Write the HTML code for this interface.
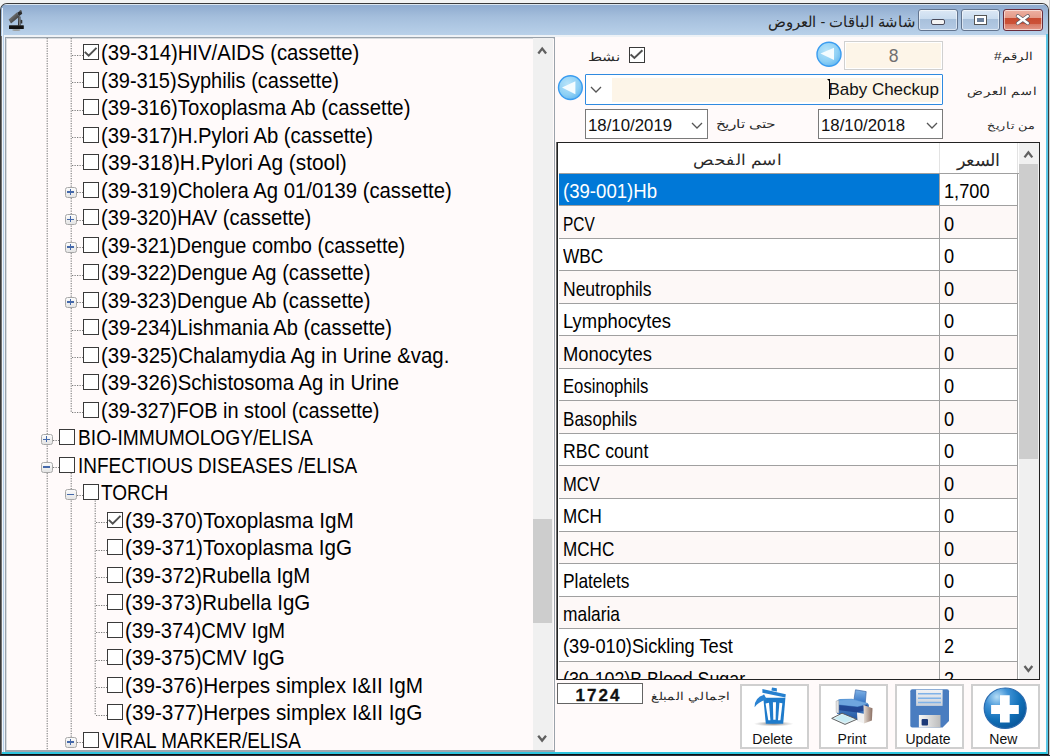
<!DOCTYPE html>
<html><head><meta charset="utf-8">
<style>
*{margin:0;padding:0;box-sizing:border-box}
html,body{width:1050px;height:756px;overflow:hidden;background:#6f7d98;font-family:"Liberation Sans",sans-serif;position:relative}
.abs{position:absolute}
#frame{position:absolute;left:0;top:3px;width:1049px;height:752px;border:1px solid #3a3a3a;box-shadow:inset 1px 0 0 #707070;border-bottom-color:#101010;border-radius:7px 7px 0 0;background:#b9d1ea;overflow:hidden}
#titlebar{position:absolute;left:0;top:0;width:1047px;height:32px;background:linear-gradient(#dce6f0 0,#dce6f0 1px,#8fabcf 1px,#a4bedc 40%,#bad2ea 100%)}
#hl-left{position:absolute;left:1px;top:4px;width:1px;height:746px;background:#eef5fc}
#client{position:absolute;left:4px;top:31px;width:1041px;height:717px;background:#fffafa}
#hl-left2{position:absolute;left:3px;top:31px;width:1px;height:717px;background:#eef4fa}
#hl-top2{position:absolute;left:4px;top:31px;width:1041px;height:2px;background:#eef2f6}
#bottomline{position:absolute;left:1px;top:748px;width:1045px;height:2px;background:#2ec4de}
#rightline{position:absolute;left:1045px;top:30px;width:2px;height:720px;background:#5cc6e6}
.tbtn{position:absolute;top:9px;height:22px;border:1px solid #62748e;border-radius:3px;box-shadow:inset 0 0 0 1px rgba(255,255,255,0.55);background:linear-gradient(#dce8f5 0,#cadcef 44%,#a8c0db 45%,#b4cae4 100%)}
#closebtn{background:linear-gradient(#eeb0a2 0,#e49a88 40%,#c84a30 42%,#cc5238 68%,#d87a66 72%,#e49888 100%);border-color:#6a2c3c}
#title{position:absolute;top:13px;right:134px;transform:scaleX(0.986);transform-origin:100% 50%;font-size:14.6px;color:#222;direction:rtl;white-space:nowrap}

#tree{position:absolute;left:5px;top:37px;width:550px;height:715px;border:1px solid #9aa2aa;border-bottom:2px solid #a0a8b0;box-shadow:inset 1px 1px 0 #d8dcdf;background:#fffafa}
#treein{position:absolute;left:-6px;top:-38px;width:1050px;height:800px}
.vl{position:absolute;width:1.2px;margin-left:-0.4px;background:repeating-linear-gradient(to bottom,#6a6a6a 0 1.5px,transparent 1.5px 2.5px)}
.hl{position:absolute;height:1.2px;background:repeating-linear-gradient(to right,#6a6a6a 0 1.5px,transparent 1.5px 2.5px)}
.pm{position:absolute;width:11.5px;height:11px;border:1.2px solid #a8a8a8;border-radius:2.5px;background:linear-gradient(#fbfbfb,#e4e4e4)}
.pm .ph{position:absolute;left:1.4px;top:3.8px;width:6.2px;height:1.15px;background:#4468aa}
.pm .pv{position:absolute;left:3.85px;top:1.2px;width:1.3px;height:6.2px;background:#4468aa}
.cb{position:absolute;width:16px;height:16px;border:1.5px solid #3a3a3a;background:#fff}
.cb svg{position:absolute;left:0;top:0}
.tt{position:absolute;font-size:21.5px;line-height:24px;white-space:nowrap;color:#000;transform-origin:0 50%}

#tsb{position:absolute;left:527px;top:0px;width:20px;height:712px;background:#f0f0f0}
#tsb .thumb{position:absolute;left:0px;top:481px;width:19px;height:104px;background:#cdcdcd}

.lbl{position:absolute;direction:rtl;white-space:nowrap;font-size:13px;color:#2a2a2a}
#num{position:absolute;left:844px;top:41px;width:99px;height:29px;border:1px solid #d0d0d0;box-shadow:inset 0 0 0 1px #fff;background:#fdf5e8;color:#707070;font-size:17.5px;text-align:center;line-height:28px}
.circ{position:absolute;width:25px;height:25px;border-radius:50%;background:radial-gradient(circle at 50% 45%,#c4e8fb 0,#8ed0f5 45%,#47a4e8 80%,#3d97e0 100%)}
.circ svg{position:absolute;left:0;top:0}
#active{position:absolute;left:629px;top:47px;width:16px;height:16px;border:1.5px solid #3a3a3a;background:#fff}
#namebox{position:absolute;left:585px;top:74px;width:358px;height:31px;border:1px solid #2f8ae0;border-radius:1px;background:#fff}
#namebox .ed{position:absolute;left:26px;top:2.5px;width:329px;height:24.5px;background:#fdf5e8}
#namebox .tx{position:absolute;right:2px;top:0px;font-size:17px;line-height:24px;color:#111;white-space:nowrap}
#namebox .caret{position:absolute;left:243px;top:3.5px;width:1.2px;height:20px;background:#000}
.date{position:absolute;height:30px;border:1px solid #7a7a7a;background:#fff}
.date .tx{position:absolute;left:1.5px;top:1.5px;font-size:16px;line-height:28px;color:#111;transform:scaleX(1.05);transform-origin:0 50%}
.chev{position:absolute}

#grid{position:absolute;left:557px;top:142px;width:483px;height:538px;border:1px solid #222;background:#fff;overflow:hidden}
#ghead{position:absolute;left:1px;top:0;width:460px;height:30.8px;background:#fff;border-bottom:1px solid #a0a0a0}
#ghead .c1{position:absolute;left:0;top:0;width:381px;height:29.8px;border-right:1px solid #e3e3e3}
#ghead .c2{position:absolute;left:381px;top:0;width:78px;height:29.8px;border-right:1px solid #e3e3e3}
.gr{position:absolute;left:1px;width:459px;height:32.52px;border-bottom:1px solid #a0a0a0}
.gr .gn{position:absolute;left:0;top:0;width:381px;height:100%;border-right:1px solid #a0a0a0;font-size:19.8px;line-height:31px;padding-top:2.4px;padding-left:4px;white-space:nowrap;color:#000}
.gr .gp{position:absolute;left:381px;top:0;width:78px;height:100%;border-right:1px solid #a0a0a0;font-size:19.8px;line-height:31px;padding-top:2.4px;padding-left:4px;color:#000}
.gp span{display:inline-block;transform-origin:0 50%;transform:scaleX(0.92)}
.gn span{display:inline-block;transform-origin:0 50%}
.gr.alt{background:#fdf8f7}
.gr.ev{background:#fff}
.gr.sel .gn{background:#0078d7;color:#fff}
.gr.sel .gp{background:#fff}
#gsb{position:absolute;left:461px;top:0;width:20px;height:536px;background:#f0f0f0}
#gsb .thumb{position:absolute;left:0px;top:21.3px;width:19px;height:294.4px;background:#cdcdcd}

#total{position:absolute;left:557px;top:683px;width:86px;height:21px;border:1px solid #646464;background:#fff;font-weight:bold;font-size:17px;line-height:24px;text-align:center;letter-spacing:2px;padding-right:3px;-webkit-text-stroke:0.3px #111;color:#111}
.btn{position:absolute;top:684px;width:69px;height:65px;border:2px solid #cfcfcf;background:#fff}
.btn .bt{position:absolute;left:0;width:100%;top:45px;text-align:center;font-size:14px;color:#111}
.btn svg{position:absolute}
</style></head>
<body>
<div class="abs" style="left:0;top:0;width:1050px;height:12px;background:#f3f3f3"></div>
<div class="abs" style="left:1049px;top:0;width:1px;height:755px;background:#cfcfcf"></div>
<div class="abs" style="left:0;top:755px;width:1050px;height:1px;background:#2a2f3c"></div>
<div id="frame">
  <div id="titlebar"></div>
  <div id="hl-left"></div>
  <div id="client"></div><div id="hl-left2"></div><div id="hl-top2"></div>
  <div id="rightline"></div>
  <div id="bottomline"></div>
</div>
<!-- microscope icon -->
<svg class="abs" style="left:6px;top:6px" width="22" height="28" viewBox="6 6 22 28">
  <defs><linearGradient id="mt" x1="0" y1="0" x2="1" y2="1"><stop offset="0" stop-color="#9a9a9a"/><stop offset="0.5" stop-color="#5a5a5a"/><stop offset="1" stop-color="#1a1a1a"/></linearGradient></defs>
  <ellipse cx="16.3" cy="30" rx="4" ry="1" fill="#8a8070" opacity="0.6"/>
  <path d="M18.2 16.5 L20.4 16.5 L20.6 26.5 L18 26.5 Z" fill="#2a2a2a"/>
  <path d="M19.2 17 L19.6 26" stroke="#bbb" stroke-width="0.6"/>
  <path d="M20.6 19.5 L22.3 20.3 L22.3 23.5 L20.6 23.5 Z" fill="#333"/>
  <path d="M8.6 19.4 L16.8 12.4 L19.2 16.8 L11 23.6 Z" fill="url(#mt)"/>
  <path d="M17.2 12.8 L21.2 10.2 L22.2 13.8 L18.9 16.2 Z" fill="#2c2c2c"/>
  <path d="M19.3 11.3 L20.2 9.9 L21.2 10.7 L20.6 12 Z" fill="#555"/>
  <rect x="9" y="25.3" width="14.8" height="3.7" rx="0.6" fill="#121212"/>
  <path d="M9.5 25.6 H23.3" stroke="#555" stroke-width="0.5"/>
</svg>
<div id="title">شاشة الباقات - العروض</div>
<div class="tbtn" style="left:918px;width:40px"><div style="position:absolute;left:11.5px;top:9px;width:14.5px;height:6px;background:#f4f4f4;border:1.5px solid #4a4a5a;border-radius:2px"></div></div>
<div class="tbtn" style="left:961px;width:39px"><div style="position:absolute;left:12px;top:5px;width:13px;height:10px;background:#fff;border:1px solid #555"><div style="position:absolute;left:2px;top:2px;width:7px;height:4px;background:#6b7f9b"></div></div></div>
<div class="tbtn" id="closebtn" style="left:1003px;width:40px"><svg style="position:absolute;left:10px;top:2px" width="18" height="16" viewBox="0 0 18 16"><path d="M3.8 4.1 L13.8 11.2 M13.8 4.1 L3.8 11.2" stroke="#5a5a66" stroke-width="3.8" stroke-linecap="round"/><path d="M3.8 4.1 L13.8 11.2 M13.8 4.1 L3.8 11.2" stroke="#fff" stroke-width="2.4" stroke-linecap="round"/></svg></div>

<div id="tree">
  <div id="treein">
<svg style="position:absolute;left:0;top:0" width="1050" height="800" viewBox="0 0 1050 800"><path d="M47.2 38.00V750.00M71.2 38.00V412.60M71.2 470.60V742.60M95.2 498.10V715.10M72 55.50H83M72 82.50H83M72 110.50H83M72 137.50H83M72 165.50H83M72 192.50H83M72 220.50H83M72 247.50H83M72 275.50H83M72 302.50H83M72 330.50H83M72 357.50H83M72 385.50H83M72 412.50H83M48 440.50H59M48 467.50H59M72 495.50H83M96 522.50H107M96 550.50H107M96 577.50H107M96 605.50H107M96 632.50H107M96 660.50H107M96 687.50H107M96 715.50H107M72 742.50H83" fill="none" stroke="#7c7c7c" stroke-width="1.1" stroke-dasharray="1.25 1.25"/></svg>
<div class="cb" style="left:83px;top:44.1px"><svg width="14" height="14" viewBox="0 0 14 14"><path d="M0.8 6.9 L4.7 10.7 L12.5 2.9" fill="none" stroke="#505050" stroke-width="2"/></svg></div>
<div class="tt" style="left:101.0px;top:41.2px;transform:scaleX(0.9439)">(39-314)HIV/AIDS (cassette)</div>
<div class="cb" style="left:83px;top:71.6px"></div>
<div class="tt" style="left:101.0px;top:68.7px;transform:scaleX(0.9306)">(39-315)Syphilis (cassette)</div>
<div class="cb" style="left:83px;top:99.1px"></div>
<div class="tt" style="left:101.0px;top:96.2px;transform:scaleX(0.9450)">(39-316)Toxoplasma Ab (cassette)</div>
<div class="cb" style="left:83px;top:126.6px"></div>
<div class="tt" style="left:101.0px;top:123.7px;transform:scaleX(0.9446)">(39-317)H.Pylori Ab (cassette)</div>
<div class="cb" style="left:83px;top:154.1px"></div>
<div class="tt" style="left:101.0px;top:151.2px;transform:scaleX(0.9702)">(39-318)H.Pylori Ag (stool)</div>
<div class="pm" style="left:65px;top:186.6px"><span class="ph"></span><span class="pv"></span></div>
<div class="cb" style="left:83px;top:181.6px"></div>
<div class="tt" style="left:101.0px;top:178.7px;transform:scaleX(0.9435)">(39-319)Cholera Ag 01/0139 (cassette)</div>
<div class="pm" style="left:65px;top:214.1px"><span class="ph"></span><span class="pv"></span></div>
<div class="cb" style="left:83px;top:209.1px"></div>
<div class="tt" style="left:101.0px;top:206.2px;transform:scaleX(0.9379)">(39-320)HAV (cassette)</div>
<div class="pm" style="left:65px;top:241.6px"><span class="ph"></span><span class="pv"></span></div>
<div class="cb" style="left:83px;top:236.6px"></div>
<div class="tt" style="left:101.0px;top:233.7px;transform:scaleX(0.9290)">(39-321)Dengue combo (cassette)</div>
<div class="cb" style="left:83px;top:264.1px"></div>
<div class="tt" style="left:101.0px;top:261.2px;transform:scaleX(0.9355)">(39-322)Dengue Ag (cassette)</div>
<div class="pm" style="left:65px;top:296.6px"><span class="ph"></span><span class="pv"></span></div>
<div class="cb" style="left:83px;top:291.6px"></div>
<div class="tt" style="left:101.0px;top:288.7px;transform:scaleX(0.9355)">(39-323)Dengue Ab (cassette)</div>
<div class="cb" style="left:83px;top:319.1px"></div>
<div class="tt" style="left:101.0px;top:316.2px;transform:scaleX(0.9364)">(39-234)Lishmania Ab (cassette)</div>
<div class="cb" style="left:83px;top:346.6px"></div>
<div class="tt" style="left:101.0px;top:343.7px;transform:scaleX(0.9495)">(39-325)Chalamydia Ag in Urine &amp;vag.</div>
<div class="cb" style="left:83px;top:374.1px"></div>
<div class="tt" style="left:101.0px;top:371.2px;transform:scaleX(0.9446)">(39-326)Schistosoma Ag in Urine</div>
<div class="cb" style="left:83px;top:401.6px"></div>
<div class="tt" style="left:101.0px;top:398.7px;transform:scaleX(0.9285)">(39-327)FOB in stool (cassette)</div>
<div class="pm" style="left:41px;top:434.1px"><span class="ph"></span><span class="pv"></span></div>
<div class="cb" style="left:59px;top:429.1px"></div>
<div class="tt" style="left:77.5px;top:426.2px;transform:scaleX(0.8935)">BIO-IMMUMOLOGY/ELISA</div>
<div class="pm" style="left:41px;top:461.6px"><span class="ph"></span></div>
<div class="cb" style="left:59px;top:456.6px"></div>
<div class="tt" style="left:77.5px;top:453.7px;transform:scaleX(0.8820)">INFECTIOUS DISEASES /ELISA</div>
<div class="pm" style="left:65px;top:489.1px"><span class="ph"></span></div>
<div class="cb" style="left:83px;top:484.1px"></div>
<div class="tt" style="left:101.0px;top:481.2px;transform:scaleX(0.8844)">TORCH</div>
<div class="cb" style="left:107px;top:511.6px"><svg width="14" height="14" viewBox="0 0 14 14"><path d="M0.8 6.9 L4.7 10.7 L12.5 2.9" fill="none" stroke="#505050" stroke-width="2"/></svg></div>
<div class="tt" style="left:124.7px;top:508.7px;transform:scaleX(0.9618)">(39-370)Toxoplasma IgM</div>
<div class="cb" style="left:107px;top:539.1px"></div>
<div class="tt" style="left:124.7px;top:536.2px;transform:scaleX(0.9594)">(39-371)Toxoplasma IgG</div>
<div class="cb" style="left:107px;top:566.6px"></div>
<div class="tt" style="left:124.7px;top:563.7px;transform:scaleX(0.9453)">(39-372)Rubella IgM</div>
<div class="cb" style="left:107px;top:594.1px"></div>
<div class="tt" style="left:124.7px;top:591.2px;transform:scaleX(0.9506)">(39-373)Rubella IgG</div>
<div class="cb" style="left:107px;top:621.6px"></div>
<div class="tt" style="left:124.7px;top:618.7px;transform:scaleX(0.9374)">(39-374)CMV IgM</div>
<div class="cb" style="left:107px;top:649.1px"></div>
<div class="tt" style="left:124.7px;top:646.2px;transform:scaleX(0.9410)">(39-375)CMV IgG</div>
<div class="cb" style="left:107px;top:676.6px"></div>
<div class="tt" style="left:124.7px;top:673.7px;transform:scaleX(0.9632)">(39-376)Herpes simplex I&amp;II IgM</div>
<div class="cb" style="left:107px;top:704.1px"></div>
<div class="tt" style="left:124.7px;top:701.2px;transform:scaleX(0.9643)">(39-377)Herpes simplex I&amp;II IgG</div>
<div class="pm" style="left:65px;top:736.6px"><span class="ph"></span><span class="pv"></span></div>
<div class="cb" style="left:83px;top:731.6px"></div>
<div class="tt" style="left:101.5px;top:728.7px;transform:scaleX(0.8788)">VIRAL MARKER/ELISA</div>
  </div>
  <div id="tsb">
    <div class="thumb"></div>
  </div>
</div>

<!-- right panel -->
<div class="lbl" style="left:994.3px;top:50.03px;font-size:12.25px;line-height:normal;transform-origin:0 0;transform:scale(1.1143,0.9333)">الرقم#</div>
<div id="num">8</div>
<svg class="abs" style="left:814px;top:40px" width="30" height="30" viewBox="814 40 30 30"><defs><radialGradient id="cg" cx="40%" cy="35%" r="65%"><stop offset="0" stop-color="#b8e4fa"/><stop offset="0.7" stop-color="#8ed0f5"/><stop offset="1" stop-color="#6cbcf0"/></radialGradient></defs><circle cx="829" cy="54.2" r="12" fill="url(#cg)" stroke="#3a9cf0" stroke-width="1.4"/><path d="M820.5 53.6 L834 47.7 L834 60 Z" fill="#f4fcff"/></svg>
<div id="active"><svg width="14" height="14" viewBox="0 0 14 14"><path d="M0.6 6.4 L4.4 9.9 L12.4 2.3" fill="none" stroke="#505050" stroke-width="2"/></svg></div>
<div class="lbl" style="left:587.99px;top:49.65px;font-size:14.0px;line-height:normal;transform-origin:0 0;transform:scale(1.1148,0.8727)">نشط</div>
<div class="lbl" style="left:966.81px;top:84.47px;font-size:12.5px;line-height:normal;transform-origin:0 0;transform:scale(1.0871,0.9154)">اسم العرض</div>
<svg class="abs" style="left:555px;top:73px" width="30" height="30" viewBox="555 73 30 30"><circle cx="570.4" cy="87.6" r="11.9" fill="url(#cg)" stroke="#3a9cf0" stroke-width="1.4"/><path d="M562 87.6 L575.4 81.2 L575.4 94.2 Z" fill="#f4fcff"/></svg>
<div id="namebox">
  <svg class="chev" style="left:4px;top:11px" width="12" height="7" viewBox="0 0 12 7"><path d="M1 1 L6 6 L11 1" fill="none" stroke="#555" stroke-width="1.3"/></svg>
  <div class="ed"><div class="tx">Baby Checkup</div></div>
  <div class="caret"></div><div style="position:absolute;left:241px;top:3.5px;width:0;height:0;border-top:2.5px solid #000;border-left:2.5px solid transparent"></div>
</div>
<div class="lbl" style="left:987.27px;top:118.93px;font-size:11.75px;line-height:normal;transform-origin:0 0;transform:scale(1.1268,0.8833)">من تاريخ</div>
<div class="date" style="left:818px;top:109px;width:125px"><div class="tx">18/10/2018</div>
  <svg class="chev" style="left:107px;top:11.5px" width="12" height="7" viewBox="0 0 12 7"><path d="M1 1 L6 6 L11 1" fill="none" stroke="#555" stroke-width="1.3"/></svg></div>
<div class="lbl" style="left:716.48px;top:118.16px;font-size:13.25px;line-height:normal;transform-origin:0 0;transform:scale(1.1196,0.8714)">حتى تاريخ</div>
<div class="date" style="left:585px;top:109px;width:123px"><div class="tx">18/10/2019</div>
  <svg class="chev" style="left:105px;top:11.5px" width="12" height="7" viewBox="0 0 12 7"><path d="M1 1 L6 6 L11 1" fill="none" stroke="#555" stroke-width="1.3"/></svg></div>

<div class="abs" style="left:556px;top:142px;width:1px;height:538px;background:#6a6a6a"></div>
<div id="grid">
  <div id="ghead"><div class="c1"></div><div class="c2"></div></div>
<div class="gr sel" style="top:30.80px"><div class="gn"><span style="transform:scaleX(0.94)">(39-001)Hb</span></div><div class="gp"><span>1,700</span></div></div>
<div class="gr alt" style="top:63.32px"><div class="gn"><span style="transform:scaleX(0.78)">PCV</span></div><div class="gp"><span>0</span></div></div>
<div class="gr ev" style="top:95.84px"><div class="gn"><span style="transform:scaleX(0.8718)">WBC</span></div><div class="gp"><span>0</span></div></div>
<div class="gr alt" style="top:128.36px"><div class="gn"><span style="transform:scaleX(0.8845)">Neutrophils</span></div><div class="gp"><span>0</span></div></div>
<div class="gr ev" style="top:160.88px"><div class="gn"><span style="transform:scaleX(0.9318)">Lymphocytes</span></div><div class="gp"><span>0</span></div></div>
<div class="gr alt" style="top:193.40px"><div class="gn"><span style="transform:scaleX(0.9291)">Monocytes</span></div><div class="gp"><span>0</span></div></div>
<div class="gr ev" style="top:225.92px"><div class="gn"><span style="transform:scaleX(0.8427)">Eosinophils</span></div><div class="gp"><span>0</span></div></div>
<div class="gr alt" style="top:258.44px"><div class="gn"><span style="transform:scaleX(0.8627)">Basophils</span></div><div class="gp"><span>0</span></div></div>
<div class="gr ev" style="top:290.96px"><div class="gn"><span style="transform:scaleX(0.8918)">RBC count</span></div><div class="gp"><span>0</span></div></div>
<div class="gr alt" style="top:323.48px"><div class="gn"><span style="transform:scaleX(0.8391)">MCV</span></div><div class="gp"><span>0</span></div></div>
<div class="gr ev" style="top:356.00px"><div class="gn"><span style="transform:scaleX(0.86)">MCH</span></div><div class="gp"><span>0</span></div></div>
<div class="gr alt" style="top:388.52px"><div class="gn"><span style="transform:scaleX(0.8636)">MCHC</span></div><div class="gp"><span>0</span></div></div>
<div class="gr ev" style="top:421.04px"><div class="gn"><span style="transform:scaleX(0.8764)">Platelets</span></div><div class="gp"><span>0</span></div></div>
<div class="gr alt" style="top:453.56px"><div class="gn"><span style="transform:scaleX(0.8782)">malaria</span></div><div class="gp"><span>0</span></div></div>
<div class="gr ev" style="top:486.08px"><div class="gn"><span style="transform:scaleX(0.9218)">(39-010)Sickling Test</span></div><div class="gp"><span>2</span></div></div>
<div class="gr alt" style="top:518.60px"><div class="gn"><span style="transform:scaleX(0.9)">(39-102)B.Blood Sugar</span></div><div class="gp"><span>2</span></div></div>
  <div id="gsb">
    <div class="thumb"></div>
  </div>
</div>

<svg class="abs" style="left:0;top:0" width="1050" height="756" viewBox="0 0 1050 756" fill="none" stroke="#606060" stroke-width="2.3">
  <path d="M538.3 53.4 L542.2 48.6 L546.1 53.4"/>
  <path d="M538.2 735.8 L542.1 740.6 L546 735.8"/>
  <path d="M1024.5 157.4 L1028.4 152.4 L1032.3 157.4"/>
  <path d="M1024.5 666 L1028.4 671 L1032.3 666"/>
</svg>
<div id="total">1724</div>
<div class="lbl" style="left:651.3px;top:689.1px;font-size:12.75px;line-height:normal;transform-origin:0 0;transform:scale(1.0849,0.9)">اجمالي المبلغ</div>
<div class="lbl" style="left:693.26px;top:149.63px;font-size:16.75px;line-height:normal;transform-origin:0 0;transform:scale(1.0405,0.9222)">اسم الفحص</div>
<div class="lbl" style="left:957.03px;top:149.64px;font-size:16.75px;line-height:normal;transform-origin:0 0;transform:scale(1.0333,0.9882)">السعر</div>

<div class="btn" style="left:740px"><div class="bt" style="left:-2px">Delete</div></div>
<svg class="abs" style="left:745px;top:684px" width="60" height="46" viewBox="745 684 60 46">
  <defs><radialGradient id="shd" cx="50%" cy="50%" r="50%"><stop offset="0" stop-color="#555" stop-opacity="0.8"/><stop offset="1" stop-color="#888" stop-opacity="0"/></radialGradient></defs>
  <ellipse cx="773.6" cy="723.8" rx="20" ry="2.6" fill="url(#shd)"/>
  <path d="M763.3 697.8 L785.4 697.8 L783.2 723.8 L765.8 723.8 Z" fill="#1e7bcb"/>
  <path d="M765.6 703.5 Q766.8 712 768.3 720.2 L770.4 720.2 Q769.8 711 769 702.8 Z" fill="#fff"/>
  <path d="M772.9 702.2 L776 702.2 L775.6 719.8 L773.3 719.8 Z" fill="#fff"/>
  <path d="M779.4 702.8 L782.4 703.2 L780.4 720.2 L778 720.2 Z" fill="#fff"/>
  <path d="M762.4 689 L785.8 694.2 L785.4 697.6 L762.4 692.8 Z" fill="#2680cf"/>
  <path d="M771.4 690.4 L772 687.6 L776.8 688.3 L776.9 691.4 Z" fill="#2680cf"/>
  <path d="M754.6 707.2 Q754.4 697.4 764.2 694.6 L766.8 699.6 Q759.6 701 754.6 707.2 Z" fill="#2a83d2"/>
</svg>
<div class="btn" style="left:819px"><div class="bt" style="left:-1.5px">Print</div></div>
<svg class="abs" style="left:825px;top:684px" width="60" height="46" viewBox="825 684 60 46">
  <defs>
    <linearGradient id="pt" x1="0" y1="0" x2="0" y2="1"><stop offset="0" stop-color="#7fb2e6"/><stop offset="1" stop-color="#2f6fc2"/></linearGradient>
    <linearGradient id="pb" x1="0" y1="0" x2="0" y2="1"><stop offset="0" stop-color="#5d9ad8"/><stop offset="1" stop-color="#1d4f9c"/></linearGradient>
    <linearGradient id="ps" x1="0" y1="0" x2="1" y2="0"><stop offset="0" stop-color="#e8e0d8"/><stop offset="1" stop-color="#8a6e62"/></linearGradient>
  </defs>
  <path d="M855.5 689.8 L866.2 691.6 L865.2 704 L853.6 702.2 Z" fill="url(#pt)" stroke="#3f68a8" stroke-width="0.7"/>
  <path d="M837.5 700.5 Q838 699.2 840 699 L852 698.8 L867.5 703 L869 705 L868.5 719 L861.5 721.5 L837 713.8 Z" fill="url(#pb)"/>
  <path d="M838.5 700.5 L852 699.5 L867.5 703.5 L857.5 706.5 L839 704.5 Z" fill="#6fa6de"/>
  <path d="M839 705 L857.5 707 L867.5 704.5 L867.5 709.5 L857.5 712.5 L839 710.2 Z" fill="#1d3f8c" opacity="0.85"/>
  <path d="M863.5 705 L872.5 708.3 L871.9 720.5 L864 723.6 Z" fill="url(#ps)"/>
  <path d="M857 712.5 L864 713.8 L864 723.6 L857.5 721.2 Z" fill="#f2f2f2"/>
  <path d="M836 701 L838.8 700.5 L838.8 713.2 L836.2 712.6 Z" fill="#e2e2e2" stroke="#999" stroke-width="0.4"/>
  <path d="M831.7 718.4 L842 713.2 L856.8 719.3 L845 724.4 Z" fill="#dff0f4" stroke="#555" stroke-width="0.9"/>
  <path d="M835 718.2 L842.2 714.6 L853 719 L845.2 722.6 Z" fill="#c8ecf4"/>
</svg>
<div class="btn" style="left:895px"><div class="bt" style="left:-1.5px">Update</div></div>
<svg class="abs" style="left:900px;top:684px" width="60" height="46" viewBox="900 684 60 46">
  <defs>
    <linearGradient id="fl" x1="0" y1="0" x2="0" y2="1"><stop offset="0" stop-color="#f0f2f5"/><stop offset="1" stop-color="#c8d0da"/></linearGradient>
    <linearGradient id="fs" x1="0" y1="0" x2="1" y2="0"><stop offset="0" stop-color="#f8f8f8"/><stop offset="1" stop-color="#bcbcbc"/></linearGradient>
  </defs>
  <path d="M912.3 689.2 L947 689.2 Q949 689.2 949 691.2 L949 721.1 L942.6 727.5 L912.3 727.5 Q910.3 727.5 910.3 725.5 L910.3 691.2 Q910.3 689.2 912.3 689.2 Z" fill="#4a7dc0"/>
  <rect x="916.1" y="689.8" width="26.5" height="16.1" fill="url(#fl)"/>
  <path d="M918 693.7 H941 M918 698.3 H941 M918 702.6 H941" stroke="#7fb2e8" stroke-width="1.5"/>
  <rect x="918.9" y="715" width="21.6" height="12.5" fill="url(#fs)"/>
  <rect x="921.6" y="719" width="6.4" height="6.4" rx="1" fill="#1e3a78"/>
</svg>
<div class="btn" style="left:971px"><div class="bt" style="left:-2.2px">New</div></div>
<svg class="abs" style="left:975px;top:684px" width="60" height="46" viewBox="975 684 60 46">
  <defs><radialGradient id="ng" cx="30%" cy="22%" r="80%"><stop offset="0" stop-color="#b4dcf6"/><stop offset="0.35" stop-color="#3f92d6"/><stop offset="0.7" stop-color="#1170b8"/><stop offset="1" stop-color="#0a5a9e"/></radialGradient></defs>
  <ellipse cx="1005.2" cy="708.2" rx="21" ry="20.2" fill="url(#ng)" stroke="#2a6aae" stroke-width="1.2"/>
  <path d="M1000 695.3 H1009.7 V705 H1018.8 V714.1 H1009.7 V722.6 H1000 V714.1 H991.1 V705 H1000 Z" fill="#fff"/>
</svg>
</body></html>
